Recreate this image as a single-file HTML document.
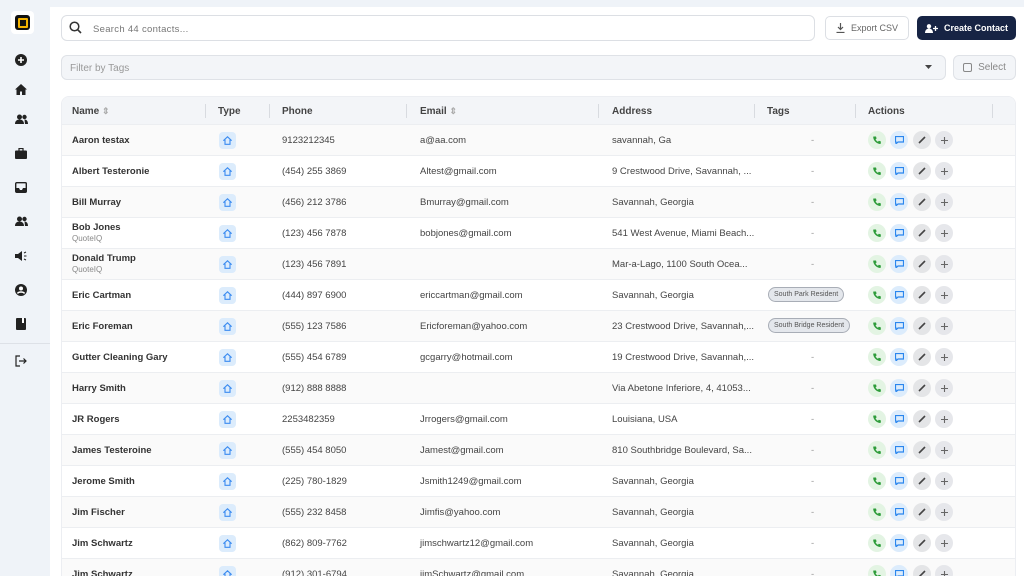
<!DOCTYPE html><html style="width:1024px;height:576px;overflow:hidden"><head><style>
*{box-sizing:border-box;margin:0;padding:0}
body{width:1024px;height:576px;overflow:hidden;background:#eff3f8;font-family:"Liberation Sans",sans-serif;position:relative;color:#333}
.side{position:absolute;left:0;top:0;width:50px;height:576px;background:#eff3f8}
.logo{position:absolute;left:11px;top:11px;width:23px;height:23px;background:#fff;border-radius:4px}
.logo div{position:absolute;left:4px;top:4px;width:15px;height:15px;background:#111;border-radius:3px}
.logo div:after{content:"";position:absolute;left:3px;top:3px;width:6px;height:6px;border:2px solid #f5b400;border-radius:1px}
.si{position:absolute;left:14px;width:14px;height:14px;display:flex;align-items:center;justify-content:center}
.main{position:absolute;left:50px;top:7px;width:974px;height:569px;background:#fff}
.search{position:absolute;left:61px;top:15px;width:754px;height:26px;border:1px solid #dcdfe4;border-radius:6px;font-size:9.5px;color:#777;padding:8px 0 0 31px;letter-spacing:.3px}
.btn{position:absolute;top:16px;height:24px;border-radius:5px;font-size:9px;display:flex;align-items:center;justify-content:center;gap:6px}
.filter{position:absolute;left:61px;top:55px;width:885px;height:25px;border:1px solid #dfe2e7;background:#f3f5f8;border-radius:6px;font-size:10px;color:#999;padding:7px 8px}
.sel{position:absolute;left:953px;top:55px;width:63px;height:25px;border:1px solid #dfe2e7;background:#f3f5f8;border-radius:6px;font-size:10px;color:#888;display:flex;align-items:center;justify-content:center;gap:6px}
.tbl{position:absolute;left:61px;top:96px;width:955px;height:480px;border:1px solid #eceef2;border-bottom:none;border-radius:8px 8px 0 0;overflow:hidden}
.hd{height:27px;background:#f3f5f8;position:relative;font-size:10px;font-weight:bold;color:#444}
.hd span{position:absolute;top:9px}
.hd i{position:absolute;top:7px;width:1px;height:14px;background:#d8dbe0}
.row{height:31px;border-top:1px solid #eceef1;position:relative;font-size:9.5px;color:#444}
.row:nth-child(odd){background:#fafafa}
.row span{position:absolute;top:10px;white-space:nowrap}
.nm{left:10px;font-weight:bold;color:#333}
.sub{font-size:8px;color:#888;font-weight:normal}
.ty{position:absolute;left:157px;top:7px;width:17px;height:17px;border-radius:4px;background:#dcecfc;display:flex;align-items:center;justify-content:center}
.tag{position:absolute;left:706px;top:7px;height:15px;border:1px solid #a8adb6;background:#e4e7ec;border-radius:8px;font-size:7px;padding:3px 5px;color:#555}
.ac{position:absolute;top:6px;width:18px;height:18px;border-radius:50%;display:flex;align-items:center;justify-content:center}
</style></head><body>
<div class="side">
<div class="logo"><div></div></div>
<div class="si" style="top:53px"><svg width="12" height="12"><circle cx="6" cy="6" r="6" fill="#222"/><path d="M6 3v6M3 6h6" stroke="#fff" stroke-width="1.6"/></svg></div>
<div class="si" style="top:82px"><svg width="12" height="11"><path d="M6 0L0 5.5h1.5V11h3.5V7.5h2V11h3.5V5.5H12z" fill="#222"/></svg></div>
<div class="si" style="top:112px"><svg width="13" height="10"><circle cx="4.5" cy="3" r="2.5" fill="#222"/><circle cx="9.5" cy="3" r="2.2" fill="#222"/><path d="M0 10c0-3 2-4.5 4.5-4.5S9 7 9 10zM9.5 5.5c2 0 3.5 1.5 3.5 4.5h-3z" fill="#222"/></svg></div>
<div class="si" style="top:146px"><svg width="12" height="11"><rect x="0" y="2.5" width="12" height="8.5" rx="1" fill="#222"/><rect x="4" y="0.5" width="4" height="3" fill="none" stroke="#222" stroke-width="1.2"/></svg></div>
<div class="si" style="top:180px"><svg width="12" height="11"><rect x="0.7" y="0.7" width="10.6" height="9.6" rx="1" fill="none" stroke="#222" stroke-width="1.4"/><path d="M1 6h3l1 2h2l1-2h3v4H1z" fill="#222"/></svg></div>
<div class="si" style="top:214px"><svg width="13" height="10"><circle cx="4.5" cy="3" r="2.5" fill="#222"/><circle cx="9.5" cy="3" r="2.2" fill="#222"/><path d="M0 10c0-3 2-4.5 4.5-4.5S9 7 9 10zM9.5 5.5c2 0 3.5 1.5 3.5 4.5h-3z" fill="#222"/></svg></div>
<div class="si" style="top:249px"><svg width="12" height="10"><path d="M0 3h3l4-3v10L3 7H0z" fill="#222"/><path d="M9 2l2-1M9 5h2.5M9 8l2 1" stroke="#222"/></svg></div>
<div class="si" style="top:283px"><svg width="12" height="12"><circle cx="6" cy="6" r="6" fill="#222"/><circle cx="6" cy="4.5" r="2" fill="#fff"/><path d="M2.5 9.5c1-2 6-2 7 0" stroke="#fff" stroke-width="1.4" fill="none"/></svg></div>
<div class="si" style="top:317px"><svg width="10" height="12"><rect width="10" height="12" rx="1" fill="#222"/><rect x="6" y="0" width="2" height="5" fill="#fff"/></svg></div>
<div style="position:absolute;left:0;top:343px;width:50px;height:1px;background:#dde1e7"></div>
<div class="si" style="top:354px"><svg width="12" height="12"><path d="M5 1H1v10h4" fill="none" stroke="#222" stroke-width="1.2"/><path d="M4 6h7M8.5 3.5L11 6 8.5 8.5" fill="none" stroke="#222" stroke-width="1.2"/></svg></div>
</div>
<div class="main"></div>
<div class="search">Search 44 contacts...</div>
<svg style="position:absolute;left:69px;top:21px" width="13" height="13"><circle cx="5.5" cy="5.5" r="4.3" fill="none" stroke="#333" stroke-width="1.5"/><path d="M8.7 8.7L12 12" stroke="#333" stroke-width="1.6"/></svg>
<div class="btn" style="left:825px;width:84px;border:1px solid #dcdfe4;color:#666"><svg width="9" height="10"><path d="M4.5 0v6M2 4l2.5 2.5L7 4M0.5 9.5h8" fill="none" stroke="#555" stroke-width="1.2"/></svg>Export CSV</div>
<div class="btn" style="left:917px;width:99px;background:#172444;color:#fff;font-weight:bold"><svg width="13" height="9"><circle cx="4" cy="2.3" r="2.2" fill="#fff"/><path d="M0 9c0-3 2-4.5 4-4.5S8 6 8 9z" fill="#fff"/><path d="M10.5 2v5M8 4.5h5" stroke="#fff" stroke-width="1.3"/></svg>Create Contact</div>
<div class="filter">Filter by Tags</div>
<svg style="position:absolute;left:925px;top:65px" width="7" height="4"><path d="M0 0h7L3.5 4z" fill="#444"/></svg>
<div class="sel"><span style="width:9px;height:9px;border:1px solid #888;border-radius:2px;display:inline-block"></span>Select</div>
<div class="tbl">
<div class="hd"><span style="left:10px">Name <span style="position:static;color:#aaa;font-size:9px">⇕</span></span><i style="left:143px"></i><span style="left:156px">Type</span><i style="left:207px"></i><span style="left:220px">Phone</span><i style="left:344px"></i><span style="left:358px">Email <span style="position:static;color:#aaa;font-size:9px">⇕</span></span><i style="left:536px"></i><span style="left:550px">Address</span><i style="left:692px"></i><span style="left:705px">Tags</span><i style="left:793px"></i><span style="left:806px">Actions</span><i style="left:930px"></i></div>
<div id="rows"></div>
</div>
<script>
const d=[["Aaron testax","","9123212345","a@aa.com","savannah, Ga",""],
["Albert Testeronie","","(454) 255 3869","Altest@gmail.com","9 Crestwood Drive, Savannah, ...",""],
["Bill Murray","","(456) 212 3786","Bmurray@gmail.com","Savannah, Georgia",""],
["Bob Jones","QuoteIQ","(123) 456 7878","bobjones@gmail.com","541 West Avenue, Miami Beach...",""],
["Donald Trump","QuoteIQ","(123) 456 7891","","Mar-a-Lago, 1100 South Ocea...",""],
["Eric Cartman","","(444) 897 6900","ericcartman@gmail.com","Savannah, Georgia","South Park Resident"],
["Eric Foreman","","(555) 123 7586","Ericforeman@yahoo.com","23 Crestwood Drive, Savannah,...","South Bridge Resident"],
["Gutter Cleaning Gary","","(555) 454 6789","gcgarry@hotmail.com","19 Crestwood Drive, Savannah,...",""],
["Harry Smith","","(912) 888 8888","","Via Abetone Inferiore, 4, 41053...",""],
["JR Rogers","","2253482359","Jrrogers@gmail.com","Louisiana, USA",""],
["James Testeroine","","(555) 454 8050","Jamest@gmail.com","810 Southbridge Boulevard, Sa...",""],
["Jerome Smith","","(225) 780-1829","Jsmith1249@gmail.com","Savannah, Georgia",""],
["Jim Fischer","","(555) 232 8458","Jimfis@yahoo.com","Savannah, Georgia",""],
["Jim Schwartz","","(862) 809-7762","jimschwartz12@gmail.com","Savannah, Georgia",""],
["Jim Schwartz","","(912) 301-6794","jimSchwartz@gmail.com","Savannah, Georgia",""]];
const home='<svg width="9" height="9"><path d="M4.5 0.8L0.8 4.2h1.2V8.3h5V4.2h1.2z" fill="none" stroke="#3b8bf0" stroke-width="1.1"/></svg>';
let h='';
d.forEach(r=>{
const nm=r[1]?`<span class="nm" style="top:4px">${r[0]}<br><span class="sub" style="position:static">${r[1]}</span></span>`:`<span class="nm">${r[0]}</span>`;
const tg=r[5]?`<div class="tag">${r[5]}</div>`:`<span style="left:749px;color:#999">-</span>`;
h+=`<div class="row">${nm}<div class="ty">${home}</div><span style="left:220px">${r[2]}</span><span style="left:358px">${r[3]}</span><span style="left:550px">${r[4]}</span>${tg}
<div class="ac" style="left:806px;background:#e3f4e3"><svg width="8" height="8"><path d="M1 0.5l2 0 .6 2-1 .8c.5 1.2 1.3 2 2.4 2.5l.8-1 2 .6v2C7.8 7.6 7.5 8 7 8 3.5 7.7.4 4.6 0.2 1 .2.6.5.5 1 .5z" fill="#2e9c3a"/></svg></div>
<div class="ac" style="left:828px;background:#dcecfc"><svg width="9" height="8"><path d="M0.5 0.5h8v5.5H3L1 7.8V6H.5z" fill="none" stroke="#2a86ee" stroke-width="1.2"/></svg></div>
<div class="ac" style="left:851px;background:#e4e5e7"><svg width="8" height="8"><path d="M1 7L7 1" stroke="#444" stroke-width="1.6"/></svg></div>
<div class="ac" style="left:873px;background:#e6e7eb"><svg width="7" height="7"><path d="M3.5 0v7M0 3.5h7" stroke="#666" stroke-width="1.1"/></svg></div></div>`;
});
document.getElementById('rows').innerHTML=h;
</script>
</body></html>
